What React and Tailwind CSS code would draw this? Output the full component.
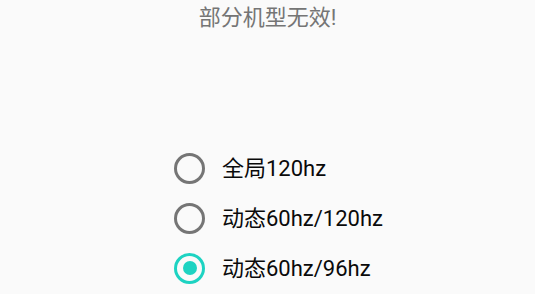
import React, { useState } from "react";

const options = ["全局120hz", "动态60hz/120hz", "动态60hz/96hz"];

const Radio = ({ checked }) => (
  <span
    className={
      "flex items-center justify-center w-[31px] h-[31px] rounded-full border-[3px] shrink-0 " +
      (checked ? "border-[#1dd3c2]" : "border-[#757575]")
    }
  >
    {checked && <span className="w-[14px] h-[14px] rounded-full bg-[#1dd3c2]" />}
  </span>
);

const App = () => {
  const [selected, setSelected] = useState(2);

  return (
    <div
      className="w-[535px] h-[294px] bg-[#fafafa] flex flex-col overflow-hidden"
      style={{ fontFamily: 'Roboto, "Noto Sans CJK SC", sans-serif' }}
    >
      <div className="h-9 leading-9 text-center text-[22px] text-[#757575]">部分机型无效!</div>
      <div className="mt-[107px] flex flex-col">
        {options.map((label, i) => (
          <button
            key={label}
            className="h-[50px] flex items-center pl-[174px] gap-[17px] text-left"
            onClick={() => setSelected(i)}
          >
            <Radio checked={selected === i} />
            <span className="text-[22px] text-[#0a0a0a]">{label}</span>
          </button>
        ))}
      </div>
    </div>
  );
};

export default App;
